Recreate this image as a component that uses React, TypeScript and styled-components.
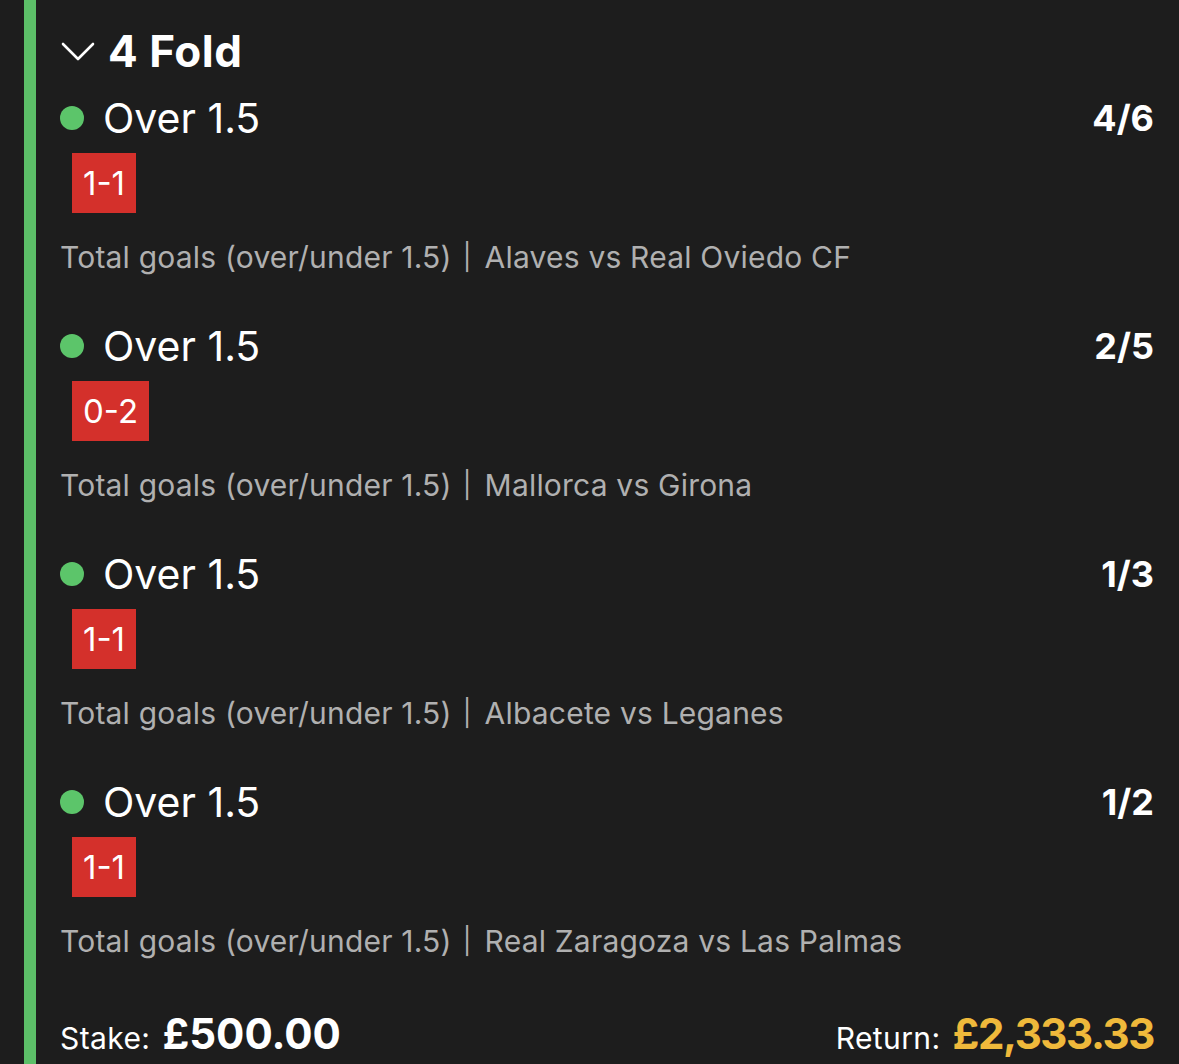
import React from 'react';
import styled, { createGlobalStyle } from 'styled-components';

const GlobalStyle = createGlobalStyle`
  html, body {
    margin: 0;
    padding: 0;
    background: #1d1d1d;
  }
  body {
    font-family: Inter, "Open Sans", sans-serif;
    color: #ffffff;
  }
`;

interface Leg {
  selection: string;
  odds: string;
  score: string;
  market: string;
  event: string;
}

const legs: Leg[] = [
  { selection: 'Over 1.5', odds: '4/6', score: '1-1', market: 'Total goals (over/under 1.5)', event: 'Alaves vs Real Oviedo CF' },
  { selection: 'Over 1.5', odds: '2/5', score: '0-2', market: 'Total goals (over/under 1.5)', event: 'Mallorca vs Girona' },
  { selection: 'Over 1.5', odds: '1/3', score: '1-1', market: 'Total goals (over/under 1.5)', event: 'Albacete vs Leganes' },
  { selection: 'Over 1.5', odds: '1/2', score: '1-1', market: 'Total goals (over/under 1.5)', event: 'Real Zaragoza vs Las Palmas' },
];

function Chevron() {
  return (
    <ChevronIcon viewBox="0 0 34 20" width="34" height="20">
      <polyline points="2,2 17,17 32,2" fill="none" stroke="#ffffff" strokeWidth="2.6" strokeLinecap="round" strokeLinejoin="round" />
    </ChevronIcon>
  );
}

export default function App() {
  return (
    <>
      <GlobalStyle />
      <Page>
        <Card>
          <Header>
            <Chevron />
            <Title>4 Fold</Title>
          </Header>

          <LegList>
            {legs.map((leg, i) => (
              <LegItem key={i}>
                <LegTop>
                  <Dot />
                  <Selection>{leg.selection}</Selection>
                  <Odds>{leg.odds}</Odds>
                </LegTop>
                <ScoreBadge>{leg.score}</ScoreBadge>
                <Description>
                  <span>{leg.market}</span>
                  <Separator>|</Separator>
                  <span>{leg.event}</span>
                </Description>
              </LegItem>
            ))}
          </LegList>

          <Footer>
            <Amount>
              <Label>Stake:</Label>
              <Value>£500.00</Value>
            </Amount>
            <Amount>
              <Label>Return:</Label>
              <Value highlight>£2,333.33</Value>
            </Amount>
          </Footer>
        </Card>
      </Page>
    </>
  );
}

const Page = styled.div`
  padding-left: 24px;
  min-height: 1064px;
  display: flex;
`;

const Card = styled.div`
  flex: 1;
  border-left: 12px solid #5cbf68;
  padding: 21px 25px 0 24px;
  display: flex;
  flex-direction: column;
`;

const Header = styled.div`
  display: flex;
  align-items: center;
  height: 60px;
  gap: 13px;
`;

const ChevronIcon = styled.svg`
  margin-left: 1px;
  margin-top: 2px;
`;

const Title = styled.span`
  font-size: 44px;
  font-weight: 700;
  letter-spacing: 0.5px;
  line-height: 60px;
`;

const LegList = styled.div`
  display: flex;
  flex-direction: column;
  gap: 42px;
  margin-top: 12px;
`;

const LegItem = styled.div`
  display: flex;
  flex-direction: column;
  align-items: flex-start;
`;

const LegTop = styled.div`
  display: flex;
  align-items: center;
  align-self: stretch;
  height: 50px;
`;

const Dot = styled.span`
  width: 24px;
  height: 24px;
  border-radius: 50%;
  background: #5cc56a;
  margin-right: 19px;
`;

const Selection = styled.span`
  font-size: 41px;
  font-weight: 400;
  line-height: 50px;
`;

const Odds = styled.span`
  margin-left: auto;
  font-size: 36px;
  font-weight: 700;
  line-height: 50px;
`;

const ScoreBadge = styled.span`
  margin: 10px 0 0 12px;
  height: 60px;
  padding: 0 11px;
  background: #d4302b;
  color: #ffffff;
  font-size: 33px;
  line-height: 60px;
`;

const Description = styled.div`
  display: flex;
  align-items: center;
  height: 44px;
  margin-top: 22px;
  font-size: 30px;
  line-height: 44px;
  color: #b0b0b0;
  letter-spacing: 0.2px;
  white-space: nowrap;
`;

const Separator = styled.span`
  margin: 0 13px 0 11px;
  font-size: 26px;
  line-height: 44px;
`;

const Footer = styled.div`
  margin-top: 45px;
  display: flex;
  justify-content: space-between;
  align-items: baseline;
`;

const Amount = styled.div`
  display: flex;
  align-items: baseline;
  gap: 12px;
`;

const Label = styled.span`
  font-size: 30px;
  font-weight: 400;
  color: #ffffff;
  letter-spacing: 0.4px;
`;

const Value = styled.span<{ highlight?: boolean }>`
  font-size: 42px;
  font-weight: 700;
  color: ${(p) => (p.highlight ? '#efb93b' : '#ffffff')};
  letter-spacing: ${(p) => (p.highlight ? '-1.4px' : '0')};
`;
